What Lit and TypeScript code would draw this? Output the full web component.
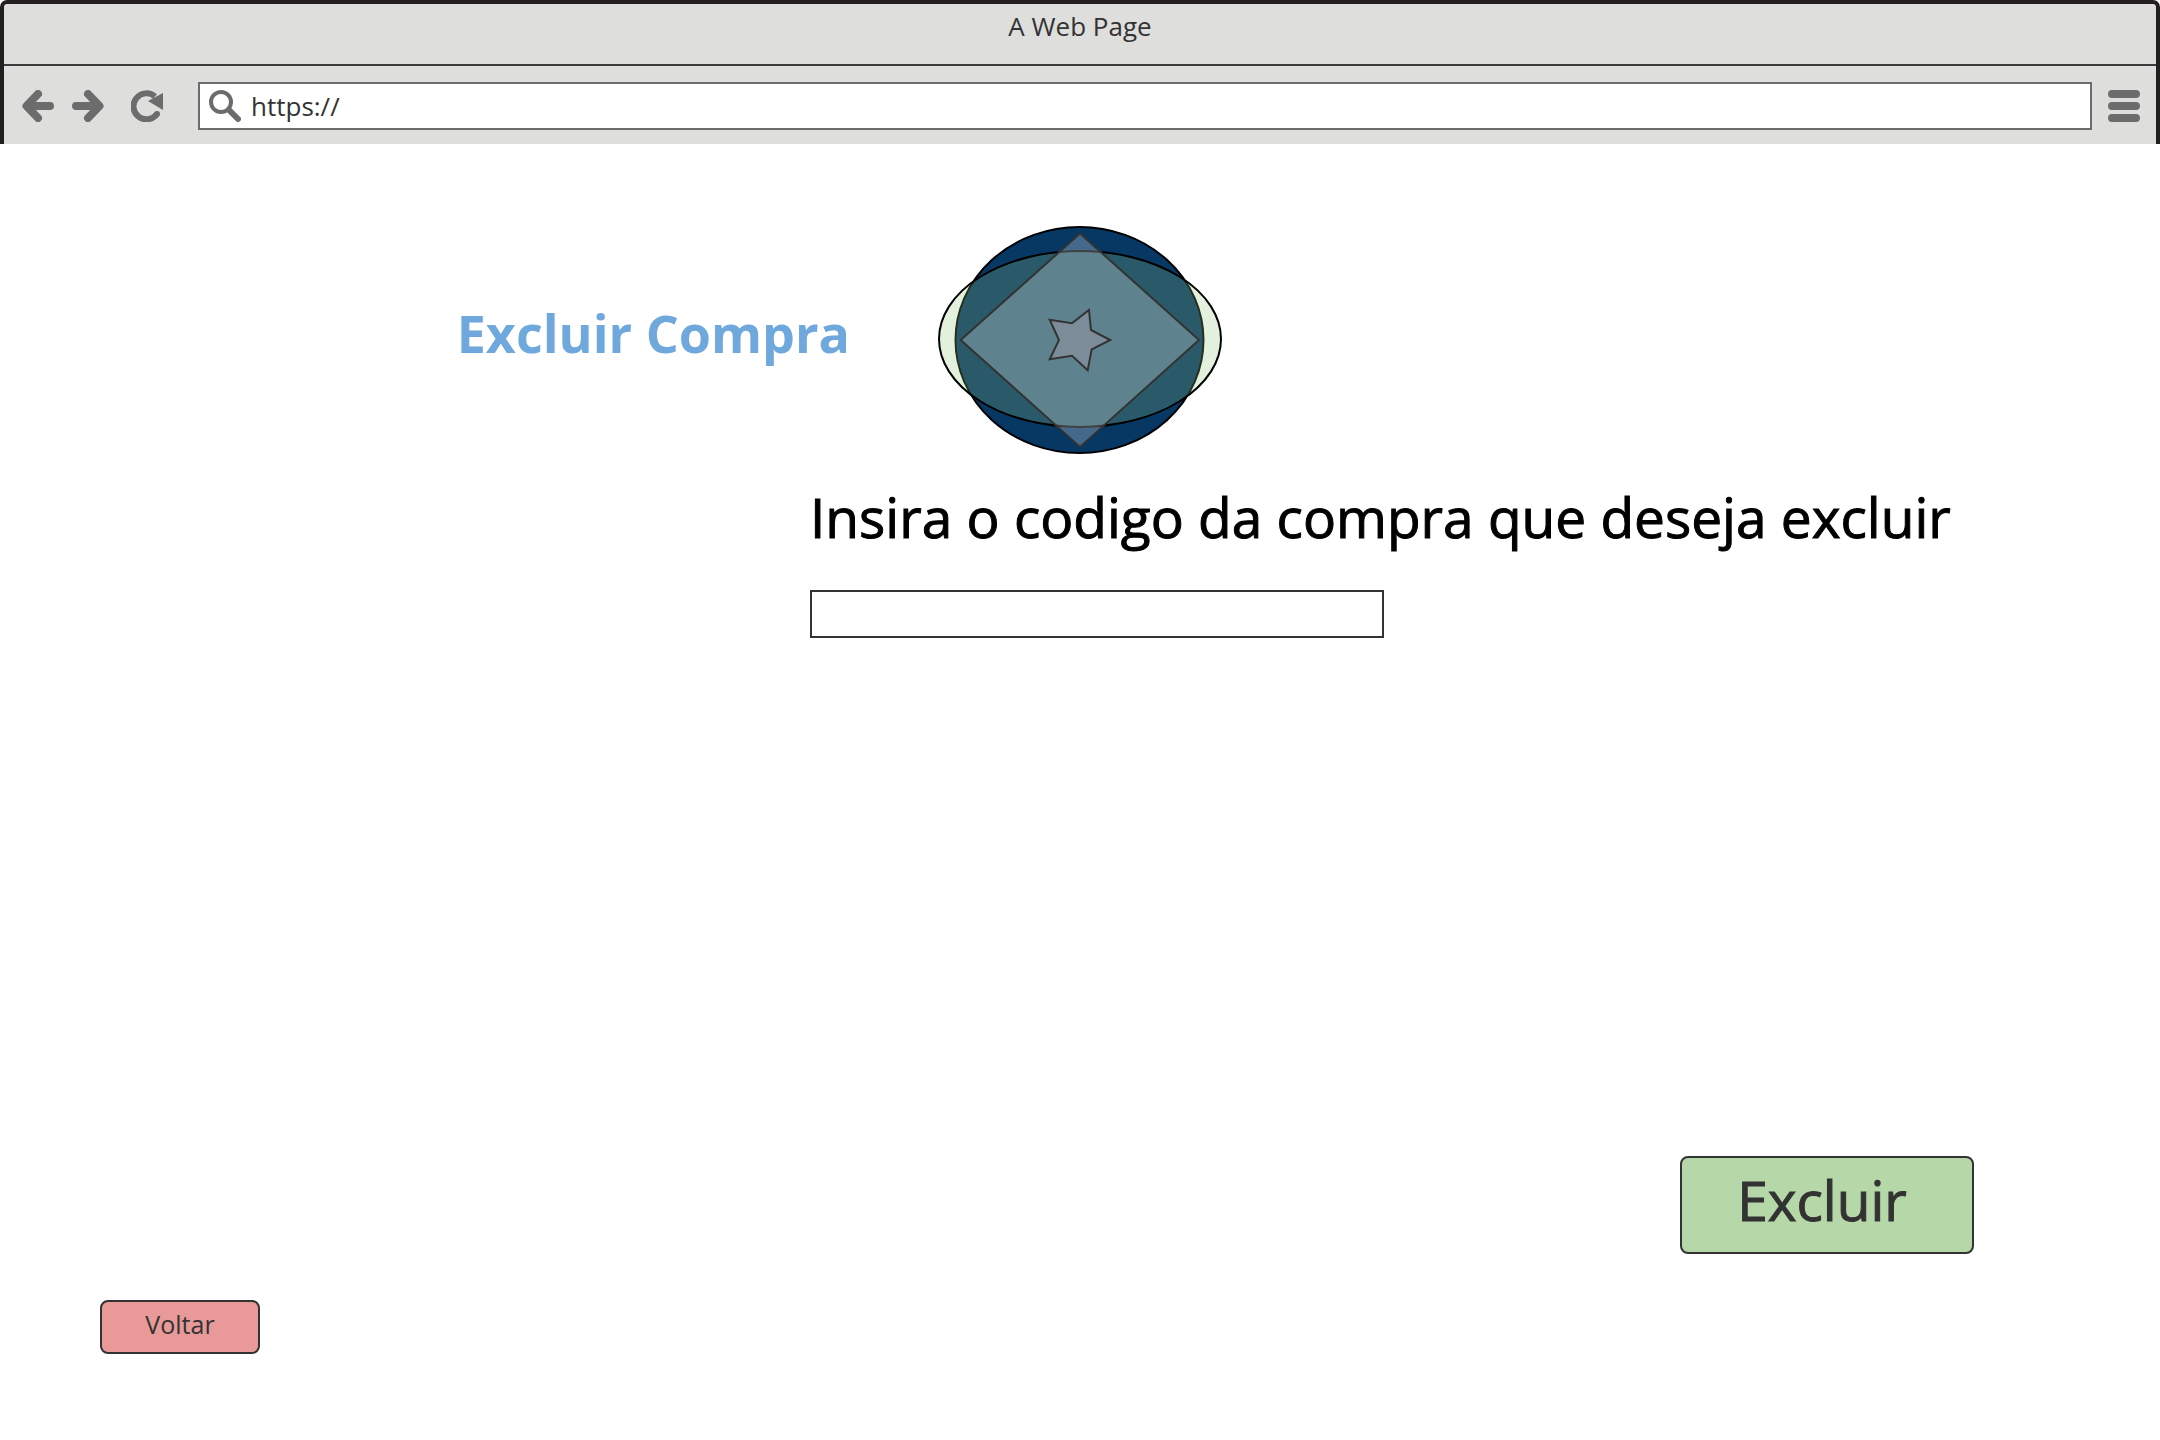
import { LitElement, html, css } from "lit";
import { customElement } from "lit/decorators.js";

@customElement("browser-bar")
class BrowserBar extends LitElement {
  static styles = css`
    :host {
      display: block;
      box-sizing: border-box;
      border: 4px solid #231f20;
      border-bottom: 0;
      border-radius: 7px 7px 0 0;
      background: #dededc;
      color: #333;
      font: 26px/32px "Open Sans", sans-serif;
    }
    .title {
      padding: 6px 0 22px;
      border-bottom: 2px solid #3c3c3c;
      text-align: center;
    }
    .tools {
      display: flex;
      align-items: center;
      padding: 16px 16px 14px 18px;
    }
    .icon {
      display: block;
      width: 32px;
      height: 32px;
      padding: 0;
      border: 0;
      background: none;
      flex: none;
    }
    svg {
      display: block;
      width: 32px;
      height: 32px;
      fill: none;
      stroke: #6c6c6c;
      stroke-linecap: round;
      stroke-linejoin: round;
      flex: none;
    }
    .forward {
      margin-left: 18px;
    }
    .reload {
      margin-left: 27px;
    }
    .address {
      display: flex;
      align-items: center;
      flex: 1;
      gap: 10px;
      box-sizing: border-box;
      height: 48px;
      margin: 0 16px 0 35px;
      padding: 0 9px;
      border: 2px solid #6c6c6c;
      background: #fff;
    }
    .url {
      flex: 1;
      min-width: 0;
      padding: 0;
      border: 0;
      outline: 0;
      background: none;
      color: #333;
      font: inherit;
    }
  `;

  render() {
    return html`
      <div class="title">A Web Page</div>
      <div class="tools">
        <button class="icon" aria-label="Back">
          <svg viewBox="0 0 32 32" stroke-width="8"><path d="M16 4 4.500 16 16 28M5 16H28" /></svg>
        </button>
        <button class="icon forward" aria-label="Forward">
          <svg viewBox="0 0 32 32" stroke-width="8"><path d="M16 4 27.500 16 16 28M27 16H4" /></svg>
        </button>
        <button class="icon reload" aria-label="Reload">
          <svg viewBox="0 0 32 32" stroke-width="6">
            <path d="M26 24A13 13 0 1 1 24 6.500" stroke-linecap="butt" />
            <circle cx="26" cy="24" r="3" fill="#6c6c6c" stroke="none" />
            <path d="M32 3V20L17 11Z" fill="#6c6c6c" stroke="none" />
          </svg>
        </button>
        <label class="address">
          <svg viewBox="0 0 32 32" stroke-width="4" aria-label="Address">
            <circle cx="12" cy="12" r="10" />
            <path d="M20 20 29 29" stroke-width="6" />
          </svg>
          <input class="url" type="text" value="https://" />
        </label>
        <button class="icon" aria-label="Menu">
          <svg viewBox="0 0 32 32" stroke-width="8"><path d="M4 4H28M4 16H28M4 28H28" /></svg>
        </button>
      </div>
    `;
  }
}

@customElement("app-root")
class AppRoot extends LitElement {
  static styles = css`
    :host {
      display: flex;
      flex-direction: column;
      min-height: 100vh;
      background: #fff;
      font-family: "Open Sans", sans-serif;
    }
    .page {
      display: flex;
      flex-direction: column;
      flex: 1;
      padding: 82px 0 86px;
    }
    .hero {
      display: grid;
      grid-template-columns: 1fr auto 1fr;
      align-items: center;
    }
    .heading {
      margin: 0;
      padding: 0 88px 14px 0;
      color: #6fa8dc;
      font-size: 52px;
      line-height: 64px;
      font-weight: 700;
      text-align: right;
    }
    .logo {
      display: block;
      width: 284px;
      height: 228px;
    }
    .form {
      display: flex;
      flex-direction: column;
      align-items: flex-start;
      gap: 36px;
      margin: 26px 0 0 37.5%;
    }
    .label {
      color: #000;
      font-size: 55px;
      line-height: 74px;
      -webkit-text-stroke: 1px currentColor;
    }
    .code {
      box-sizing: border-box;
      width: 574px;
      max-width: 100%;
      height: 48px;
      padding: 0 12px;
      border: 2px solid #333;
      border-radius: 0;
      background: #fff;
      font: 26px "Open Sans", sans-serif;
    }
    .actions {
      display: flex;
      flex-direction: column;
      gap: 46px;
      margin-top: auto;
      padding: 0 186px 0 100px;
    }
    .button {
      box-sizing: border-box;
      border: 2px solid #333;
      border-radius: 8px;
      color: #333;
      font-family: inherit;
    }
    .delete {
      align-self: flex-end;
      width: 294px;
      height: 98px;
      padding: 0 10px 10px 0;
      background: #b6d7a8;
      font-size: 55px;
      line-height: 74px;
      -webkit-text-stroke: 1px currentColor;
    }
    .back {
      align-self: flex-start;
      width: 160px;
      height: 54px;
      padding: 0 0 6px;
      background: #ea9999;
      font-size: 25px;
      line-height: 32px;
    }
  `;

  render() {
    return html`
      <browser-bar></browser-bar>
      <main class="page">
        <div class="hero">
          <h1 class="heading">Excluir Compra</h1>
          <svg class="logo" viewBox="0 0 284 228" stroke-width="2" role="img" aria-label="Logo">
            <ellipse cx="141.500" cy="114" rx="124" ry="113" fill="#073763" stroke="#000" />
            <ellipse cx="142" cy="113" rx="141" ry="88" fill="#93c47d" fill-opacity=".25" stroke="#000" />
            <path d="M142 7.500 261 114 142 221 22.700 114Z" fill="#fff" fill-opacity=".25" stroke="#333" />
            <path
              d="M151 84 153 104 172.300 114 153.700 123.300 149.700 144.300 134 129.700 111.700 133.300 121 114 111.700 93.700 134 97.300Z"
              fill="#d5a6bd"
              fill-opacity=".25"
              stroke="#333"
            />
          </svg>
        </div>
        <form class="form">
          <label class="label" for="code">Insira o codigo da compra que deseja excluir</label>
          <input class="code" id="code" type="text" />
        </form>
        <div class="actions">
          <button class="button delete" type="button">Excluir</button>
          <button class="button back" type="button">Voltar</button>
        </div>
      </main>
    `;
  }
}
